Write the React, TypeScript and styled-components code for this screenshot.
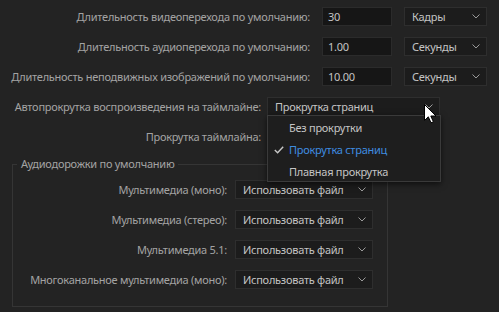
import React from "react";
import styled, { createGlobalStyle } from "styled-components";

const GlobalStyle = createGlobalStyle`
  html, body { margin: 0; padding: 0; background: #232323; }
  body { font-family: "Noto Sans", "Open Sans", sans-serif; font-size: 11px; letter-spacing: -0.26px; color: #a3a3a3; }
  * { box-sizing: border-box; }
`;

const Page = styled.div`
  position: relative;
  width: 499px;
  height: 312px;
  overflow: hidden;
  background: #232323;
  padding-top: 7px;
`;

const Stack = styled.div`
  display: flex;
  flex-direction: column;
  gap: 11px;
`;

const Row = styled.div<{ $gap: number }>`
  display: flex;
  align-items: center;
  height: 19px;
  gap: ${(p) => p.$gap}px;
`;

const Label = styled.div<{ $width: number }>`
  flex: none;
  width: ${(p) => p.$width}px;
  text-align: right;
  white-space: nowrap;
  color: #a3a3a3;
  line-height: 19px;
`;

const NumberField = styled.div`
  flex: none;
  width: 70px;
  height: 19px;
  background: #161616;
  border: 1px solid #2b2b2b;
  color: #c4c4c4;
  padding-left: 5px;
  line-height: 17px;
`;

const SelectBox = styled.div<{ $width: number }>`
  position: relative;
  flex: none;
  width: ${(p) => p.$width}px;
  height: 19px;
  display: flex;
  align-items: center;
  justify-content: space-between;
  background: #1c1c1c;
  border: 1px solid #2e2e2e;
  color: #c4c4c4;
  padding: 0 6px 0 7px;
  white-space: nowrap;
`;

const Chevron = () => (
  <svg width="8" height="5" viewBox="0 0 8 5">
    <polyline points="0.5,0.5 4,4 7.5,0.5" fill="none" stroke="#9a9a9a" strokeWidth="1" />
  </svg>
);

const Select = ({ width, value, children }: { width: number; value: string; children?: React.ReactNode }) => (
  <SelectBox $width={width}>
    <span>{value}</span>
    <Chevron />
    {children}
  </SelectBox>
);

const Menu = styled.div`
  position: absolute;
  left: -1px;
  top: 17px;
  width: 174px;
  height: 67px;
  background: #1e1e1e;
  border: 1px solid #3a3a3a;
  box-shadow: 0 2px 6px rgba(0, 0, 0, 0.6);
  padding-top: 1px;
  z-index: 5;
`;

const MenuItem = styled.div<{ $selected?: boolean }>`
  position: relative;
  height: 22px;
  line-height: 22px;
  padding-left: 21px;
  color: ${(p) => (p.$selected ? "#3f8de0" : "#c4c4c4")};
`;

const Check = styled.svg`
  position: absolute;
  left: 6px;
  top: 7px;
`;

const Group = styled.fieldset`
  margin: 10px 0 0 12px;
  width: 376px;
  border: 1px solid #353535;
  padding: 8px 15px 17px 0;
  min-width: 0;
`;

const Legend = styled.legend`
  margin-left: 4px;
  padding: 0 4px;
  line-height: 16px;
  color: #a3a3a3;
`;

const Cursor = styled.svg`
  position: absolute;
  left: 424px;
  top: 104px;
  z-index: 10;
`;

export default function App() {
  return (
    <Page>
      <GlobalStyle />
      <Stack>
        <Row $gap={12}>
          <Label $width={310}>Длительность видеоперехода по умолчанию:</Label>
          <NumberField>30</NumberField>
          <Select width={83} value="Кадры" />
        </Row>
        <Row $gap={12}>
          <Label $width={310}>Длительность аудиоперехода по умолчанию:</Label>
          <NumberField>1.00</NumberField>
          <Select width={83} value="Секунды" />
        </Row>
        <Row $gap={12}>
          <Label $width={310}>Длительность неподвижных изображений по умолчанию:</Label>
          <NumberField>10.00</NumberField>
          <Select width={83} value="Секунды" />
        </Row>
        <Row $gap={6}>
          <Label $width={261}>Автопрокрутка воспроизведения на таймлайне:</Label>
          <Select width={173} value="Прокрутка страниц">
            <Menu>
              <MenuItem>Без прокрутки</MenuItem>
              <MenuItem $selected>
                <Check width="10" height="8" viewBox="0 0 10 8">
                  <polyline points="0.8,4 3.6,6.8 9.2,0.8" fill="none" stroke="#c8c8c8" strokeWidth="1.4" />
                </Check>
                Прокрутка страниц
              </MenuItem>
              <MenuItem>Плавная прокрутка</MenuItem>
            </Menu>
          </Select>
        </Row>
        <Row $gap={6}>
          <Label $width={261}>Прокрутка таймлайна:</Label>
          <Select width={173} value="" />
        </Row>
      </Stack>
      <Group>
        <Legend>Аудиодорожки по умолчанию</Legend>
        <Stack>
          <Row $gap={8}>
            <Label $width={214}>Мультимедиа (моно):</Label>
            <Select width={138} value="Использовать файл" />
          </Row>
          <Row $gap={8}>
            <Label $width={214}>Мультимедиа (стерео):</Label>
            <Select width={138} value="Использовать файл" />
          </Row>
          <Row $gap={8}>
            <Label $width={214}>Мультимедиа 5.1:</Label>
            <Select width={138} value="Использовать файл" />
          </Row>
          <Row $gap={8}>
            <Label $width={214}>Многоканальное мультимедиа (моно):</Label>
            <Select width={138} value="Использовать файл" />
          </Row>
        </Stack>
      </Group>
      <Cursor width="13" height="20" viewBox="0 0 13 20">
        <path d="M0.5,0.5 L0.5,16.5 L4.3,12.8 L7,18.8 L9.4,17.8 L6.8,12 L12,12 Z" fill="#ffffff" stroke="#000000" strokeWidth="1" />
      </Cursor>
    </Page>
  );
}
